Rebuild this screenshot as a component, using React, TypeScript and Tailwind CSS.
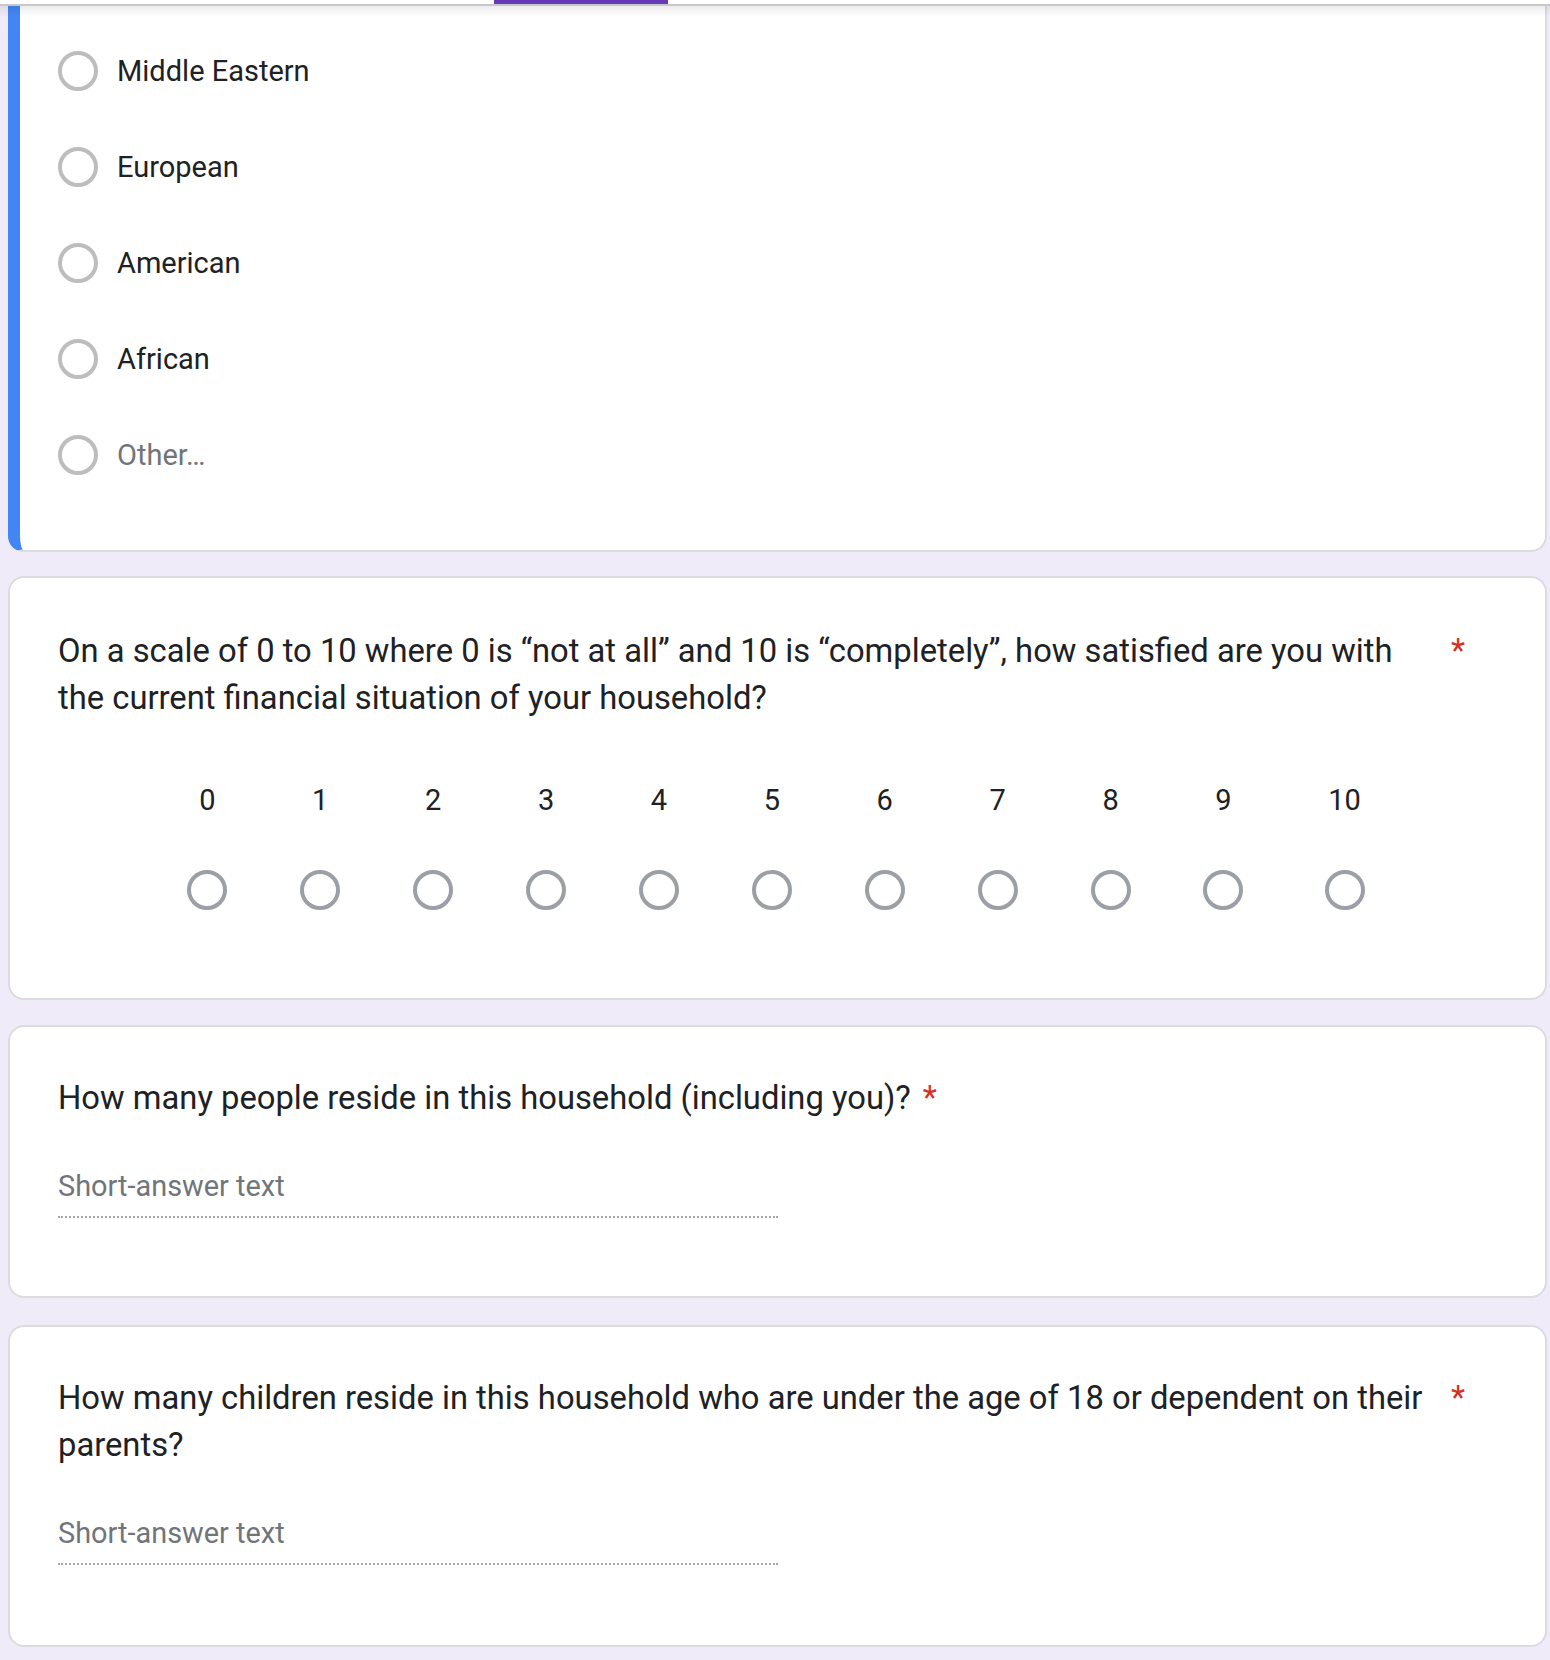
import React from "react";

const options = ["Middle Eastern", "European", "American", "African"];
const scale = ["0", "1", "2", "3", "4", "5", "6", "7", "8", "9", "10"];

function Radio({ color }: { color: string }) {
  return <div className={`w-[40px] h-[40px] rounded-full border-[4px] shrink-0 ${color}`} />;
}

function Title({ text, lower }: { text: string; lower?: boolean }) {
  return (
    <div className={`flex items-start ${lower ? "pt-[50px]" : "pt-[48px]"}`}>
      <span className="max-w-[1381px] text-[32.75px] leading-[47px] text-[#202124] font-['Roboto',sans-serif]">
        {text}
      </span>
      <span className="ml-[12px] text-[32.75px] leading-[47px] text-[#d93025] font-['Roboto',sans-serif]">*</span>
    </div>
  );
}

function ShortAnswer() {
  return (
    <div className="mt-[44px] w-[720px] pb-[10px] border-b-2 border-dotted border-[#a6a6a6]">
      <div className="text-[28.9px] leading-[40px] text-[#70757a] font-['Roboto',sans-serif]">Short-answer text</div>
    </div>
  );
}

export default function App() {
  return (
    <div className="relative min-h-[1660px] bg-[#f0ebf8] pl-[8px] pr-[3px] overflow-hidden font-['Roboto',sans-serif]">
      {/* header edge overlay */}
      <div className="absolute top-0 left-0 right-0 z-10">
        <div className="h-[4px] bg-white">
          <div className="ml-[494px] w-[174px] h-full bg-[#673ab7]" />
        </div>
        <div className="h-[2px] bg-[#c8c8cc]" />
        <div className="h-[11px] bg-gradient-to-b from-[rgba(0,0,0,0.07)] to-transparent" />
      </div>

      <div className="flex flex-col">
        {/* Card 1 */}
        <div className="bg-white border-l-[12px] border-l-[#4285f4] border-r-2 border-r-[#dadce0] border-b-2 border-b-[#dadce0] rounded-bl-[16px] rounded-br-[16px] pt-[23px] pb-[47px]">
          {options.map((o) => (
            <div key={o} className="h-[96px] flex items-center pl-[38px]">
              <Radio color="border-[#bdbdbd]" />
              <span className="ml-[19px] text-[29px] leading-[40px] text-[#202124]">{o}</span>
            </div>
          ))}
          <div className="h-[96px] flex items-center pl-[38px]">
            <Radio color="border-[#bdbdbd]" />
            <span className="ml-[19px] text-[29px] leading-[40px] text-[#70757a]">Other…</span>
          </div>
        </div>

        {/* Card 2 */}
        <div className="mt-[24px] bg-white border-2 border-[#dadce0] rounded-[16px] pl-[48px] pb-[88px]">
          <Title
            lower
            text="On a scale of 0 to 10 where 0 is “not at all” and 10 is “completely”, how satisfied are you with the current financial situation of your household?"
          />
          <div className="mt-[58px] -ml-[43px] flex justify-center">
            {scale.map((n) => (
              <div key={n} className="flex flex-col items-center px-[48.3px]">
                <div className="h-[40px] text-[29px] leading-[40px] text-[#202124]">{n}</div>
                <div className="mt-[50px] w-0 h-[40px] flex justify-center">
                  <Radio color="border-[#9aa0a6]" />
                </div>
              </div>
            ))}
          </div>
        </div>

        {/* Card 3 */}
        <div className="mt-[25px] bg-white border-2 border-[#dadce0] rounded-[16px] pl-[48px] pb-[78px]">
          <Title text="How many people reside in this household (including you)?" />
          <ShortAnswer />
        </div>

        {/* Card 4 */}
        <div className="mt-[27px] bg-white border-2 border-[#dadce0] rounded-[16px] pl-[48px] pb-[80px]">
          <Title text="How many children reside in this household who are under the age of 18 or dependent on their parents?" />
          <ShortAnswer />
        </div>
      </div>
    </div>
  );
}
